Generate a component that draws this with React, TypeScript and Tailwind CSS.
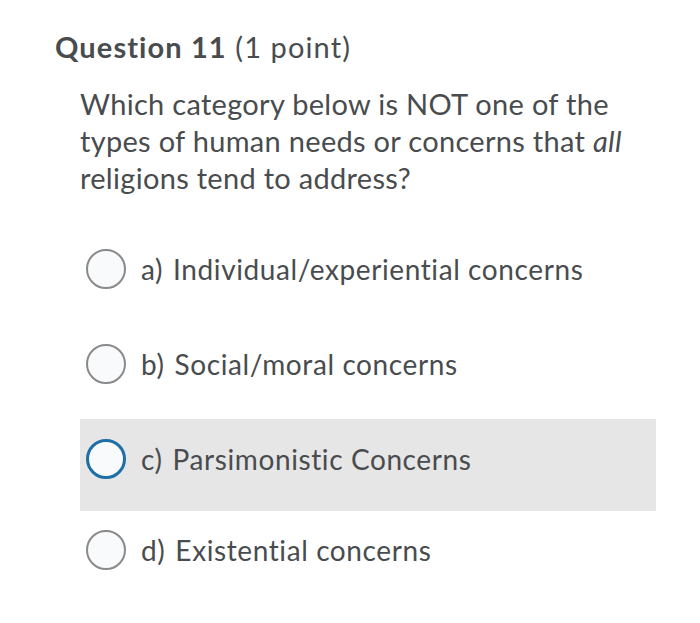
import React from "react";

const options = [
  { label: "a)", text: "Individual/experiential concerns", selected: false, row: "h-[92px] mt-[224px] pb-[4px]" },
  { label: "b)", text: "Social/moral concerns", selected: false, row: "h-[92px] mt-[3px] pb-[4px]" },
  { label: "c)", text: "Parsimonistic Concerns", selected: true, row: "h-[92px] mt-[7px] pb-[12px]" },
  { label: "d)", text: "Existential concerns", selected: false, row: "h-[82px] mt-0 pb-[4px]" },
];

const App = () => {
  return (
    <div className="w-[700px] h-[623px] bg-white text-[#494c4e] font-['Lato',sans-serif] relative">
      <div className="absolute left-0 top-0 w-full">
        <div className="pt-[28px] pl-[55px] text-[29px] leading-[38px] tracking-[1.1px]">
          <span className="font-bold">Question 11</span> (1 point)
        </div>
        <div className="absolute left-[80px] top-[85px] w-[560px] text-[29px] leading-[37px] tracking-[0.3px]">
          Which category below is NOT one of the types of human needs or concerns that <i>all</i> religions tend to address?
        </div>
      </div>
      <div className="flex flex-col pt-[1px]">
        {options.map((o) => (
          <div
            key={o.label}
            className={`${o.row} ml-[80px] w-[576px] flex items-center ${o.selected ? "bg-[#e6e6e6]" : ""}`}
          >
            <span
              className={`ml-[6px] w-[40px] h-[40px] rounded-full bg-[#f9fafb] shrink-0 ${
                o.selected ? "border-[3px] border-[#1d6fa5]" : "border-2 border-[#8a8a8a]"
              }`}
            />
            <span className="ml-[15px] text-[28px] leading-[36px] tracking-[0.6px]">
              {o.label}
              <span className="ml-[10px]">{o.text}</span>
            </span>
          </div>
        ))}
      </div>
    </div>
  );
};

export default App;
